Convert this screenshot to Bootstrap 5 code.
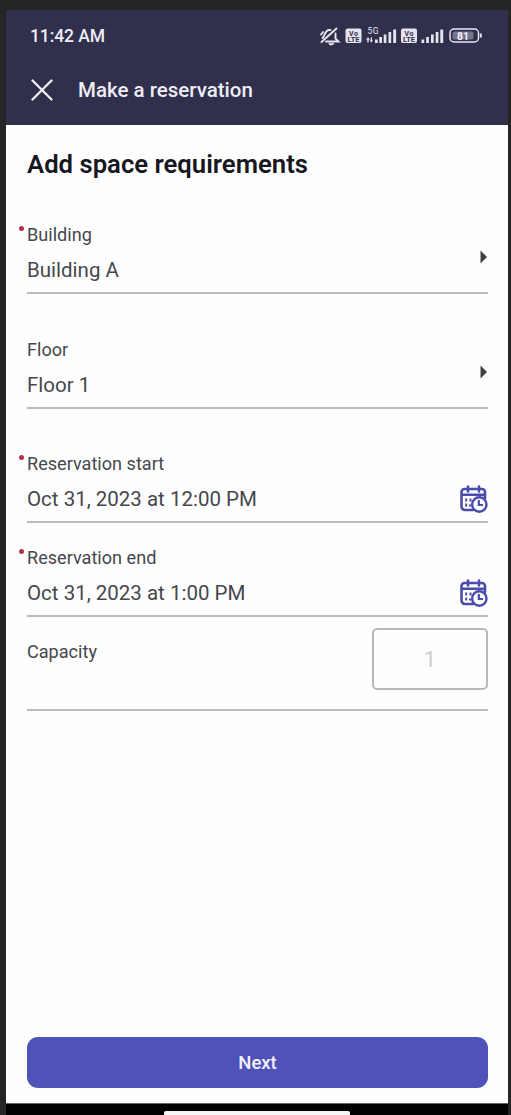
<!DOCTYPE html>
<html lang="en">
<head>
<meta charset="utf-8">
<meta name="viewport" content="width=device-width, initial-scale=1">
<title>Make a reservation</title>
<link href="https://cdn.jsdelivr.net/npm/bootstrap@5.3.0/dist/css/bootstrap.min.css" rel="stylesheet">
<style>
body{background:#252525;font-family:Roboto,"Liberation Sans",sans-serif;color:#46474c;height:1115px;overflow:hidden}
.phone{margin:10px 3px 0 6px;height:1105px;background:#fefefe}
.top-bar{height:115px;background:#302f4c;color:#eeedf5}
.status{height:52px;padding:0 26px 0 24px}
.clock{font-size:17.5px;font-weight:500;line-height:24px;letter-spacing:-.1px}
.title-row{height:56px;padding-left:25px;gap:25px}
.title-row h1{font-size:20.5px;font-weight:500;line-height:28px}
.sheet{padding:0 20px 0 21px}
.sheet h2{font-size:25.7px;font-weight:600;line-height:32px;color:#17171f;margin:23px 0 42px}
.field{height:72px;border-bottom:2px solid #bcbcbc;margin-bottom:42.7px}
.field.tight{margin-bottom:22px}
.field .caption-text{display:block;font-size:18.1px;line-height:25px}
.field .value{font-size:20.5px;line-height:26px;margin-top:10px;white-space:nowrap}
.req::before{content:"";position:absolute;left:-8px;top:4px;width:5px;height:5px;border-radius:50%;background:#b5304a}
.cap-box{width:116px;height:62px;margin-top:-11px;border:2px solid #b9b9b9;border-radius:5px;font-size:22px;color:#cdcdcf}
.next{height:51px;border-radius:11px;background:#4f53b7;color:#f1f0fb;font-size:18.5px;font-weight:500;border:0;padding:8px 0 6px}
.next:hover{background:#474ba8;color:#fff}
.actions{padding:0 20px 15px 21px}
.nav-strip{height:12px;background:#000;border-top:1px solid #666}
.home-bar{width:186px;height:4px;background:#f6f6f6;border-radius:2px 2px 0 0;margin-left:-1px}
</style>
</head>
<body>
<svg width="0" height="0" class="position-absolute" aria-hidden="true">
<symbol id="cal" viewBox="0 0 28 28">
<g fill="none" stroke="#4a4cab" stroke-width="2.600" stroke-linecap="round">
<path d="M13 25H5a3.500 3.500 0 0 1-3.500-3.500V7A3 3 0 0 1 4.500 4H22a3 3 0 0 1 3 3v6M1.500 9.700H25M8 1.500v5M19 1.500v5"/>
<path stroke-width="2" stroke-linecap="butt" d="M6.200 13.500v3M10.500 13.500v3M6.200 18.500v3M9.500 15h2M5.200 15.500h2M9 20.500h2"/>
<circle cx="19.300" cy="19.500" r="7.200" fill="#fff" stroke-width="2.400"/>
<path stroke-width="2.200" d="M18.800 15.800v4.200h3.400"/></g>
</symbol>
</svg>
<main class="phone d-flex flex-column">
<header class="top-bar">
<div class="status d-flex justify-content-between align-items-center">
<span class="clock">11:42 AM</span>
<svg width="164" height="26" viewBox="318 22.500 164 26" fill="none" stroke="#e6e4ef" font-family="Roboto,sans-serif">
<path stroke-width="1.900" stroke-linecap="round" d="M321.500 41.500 336.500 28M322.500 37.500c2-1.500 2-6.500 6-8h2M326 41h12.500l-3-3v-5M329.500 43.200c.800 1 2.700 1 3.500 0M321 34l2-2.500"/>
<g fill="#e6e4ef" stroke="none">
<rect x="345.500" y="28" width="16" height="14.500" rx="2"/>
<rect x="401" y="28" width="16" height="14.500" rx="2"/>
<path d="M375 39h2.700v3.500H375zM379.300 36.500h2.700v6h-2.700zM383.700 34h2.700v8.500h-2.700zM388.500 31.500h2.700v11h-2.700zM393.200 29h2.900v13.500h-2.900zM421.500 39h2.700v3.500h-2.700zM426.200 36.500h2.700v6h-2.700zM431 34h2.700v8.500H431zM435.700 31.500h2.700v11h-2.700zM440.300 29h2.900v13.500h-2.900z"/>
<path d="M366 39l2-2.300 2 2.300h-1.300v3h-1.400v-3zM369.700 39.700h1V37h1.300v2.700h1L371.300 42z"/>
<text x="367.500" y="33.500" font-size="8.500" textLength="11">5G</text>
</g>
<g fill="#302f4c" stroke="none" font-size="7" font-weight="700">
<text x="349" y="35" textLength="9">Vo</text><text x="347.500" y="41.300" textLength="12" lengthAdjust="spacingAndGlyphs">LTE</text>
<text x="404.500" y="35" textLength="9">Vo</text><text x="403" y="41.300" textLength="12" lengthAdjust="spacingAndGlyphs">LTE</text></g>
<rect x="450" y="28.500" width="28.500" height="13" rx="4" stroke-width="1.500"/>
<rect x="452.500" y="31" width="21" height="8" rx="2" fill="#77758d" stroke="none"/>
<path stroke-width="2" d="M480.800 33v4"/>
<text x="457" y="39" font-size="10.500" font-weight="700" fill="#f2f1f7" stroke="none">81</text>
</svg>
</div>
<div class="title-row d-flex align-items-center">
<svg width="22" height="22" viewBox="0 0 22 22" role="button" aria-label="Close"><path d="M1.500 1.500l19 19M20.500 1.500l-19 19" fill="none" stroke="#f2f1f7" stroke-width="2.300" stroke-linecap="round"/></svg>
<h1 class="m-0">Make a reservation</h1>
</div>
</header>
<form class="sheet flex-grow-1">
<h2>Add space requirements</h2>
<div class="field d-flex justify-content-between">
<div><span class="caption-text position-relative req">Building</span><div class="value">Building A</div></div>
<svg class="align-self-center" width="8" height="14" viewBox="0 0 8 14"><path d="M.5.500l6.500 6.500-6.500 6.500z" fill="#3f4045"/></svg>
</div>
<div class="field d-flex justify-content-between">
<div><span class="caption-text">Floor</span><div class="value">Floor 1</div></div>
<svg class="align-self-center" width="8" height="14" viewBox="0 0 8 14"><path d="M.5.500l6.500 6.500-6.500 6.500z" fill="#3f4045"/></svg>
</div>
<div class="field tight d-flex justify-content-between">
<div><span class="caption-text position-relative req">Reservation start</span><div class="value">Oct 31, 2023 at 12:00 PM</div></div>
<svg class="align-self-end mb-2" width="28" height="28"><use href="#cal"/></svg>
</div>
<div class="field tight d-flex justify-content-between">
<div><span class="caption-text position-relative req">Reservation end</span><div class="value">Oct 31, 2023 at 1:00 PM</div></div>
<svg class="align-self-end mb-2" width="28" height="28"><use href="#cal"/></svg>
</div>
<div class="field tight d-flex justify-content-between">
<span class="caption-text">Capacity</span>
<div class="cap-box d-flex align-items-center justify-content-center">1</div>
</div>
</form>
<div class="actions"><button class="next btn w-100" type="button">Next</button></div>
<div class="nav-strip d-flex justify-content-center align-items-end"><div class="home-bar"></div></div>
</main>
<script src="https://cdn.jsdelivr.net/npm/bootstrap@5.3.0/dist/js/bootstrap.bundle.min.js"></script>
</body>
</html>
